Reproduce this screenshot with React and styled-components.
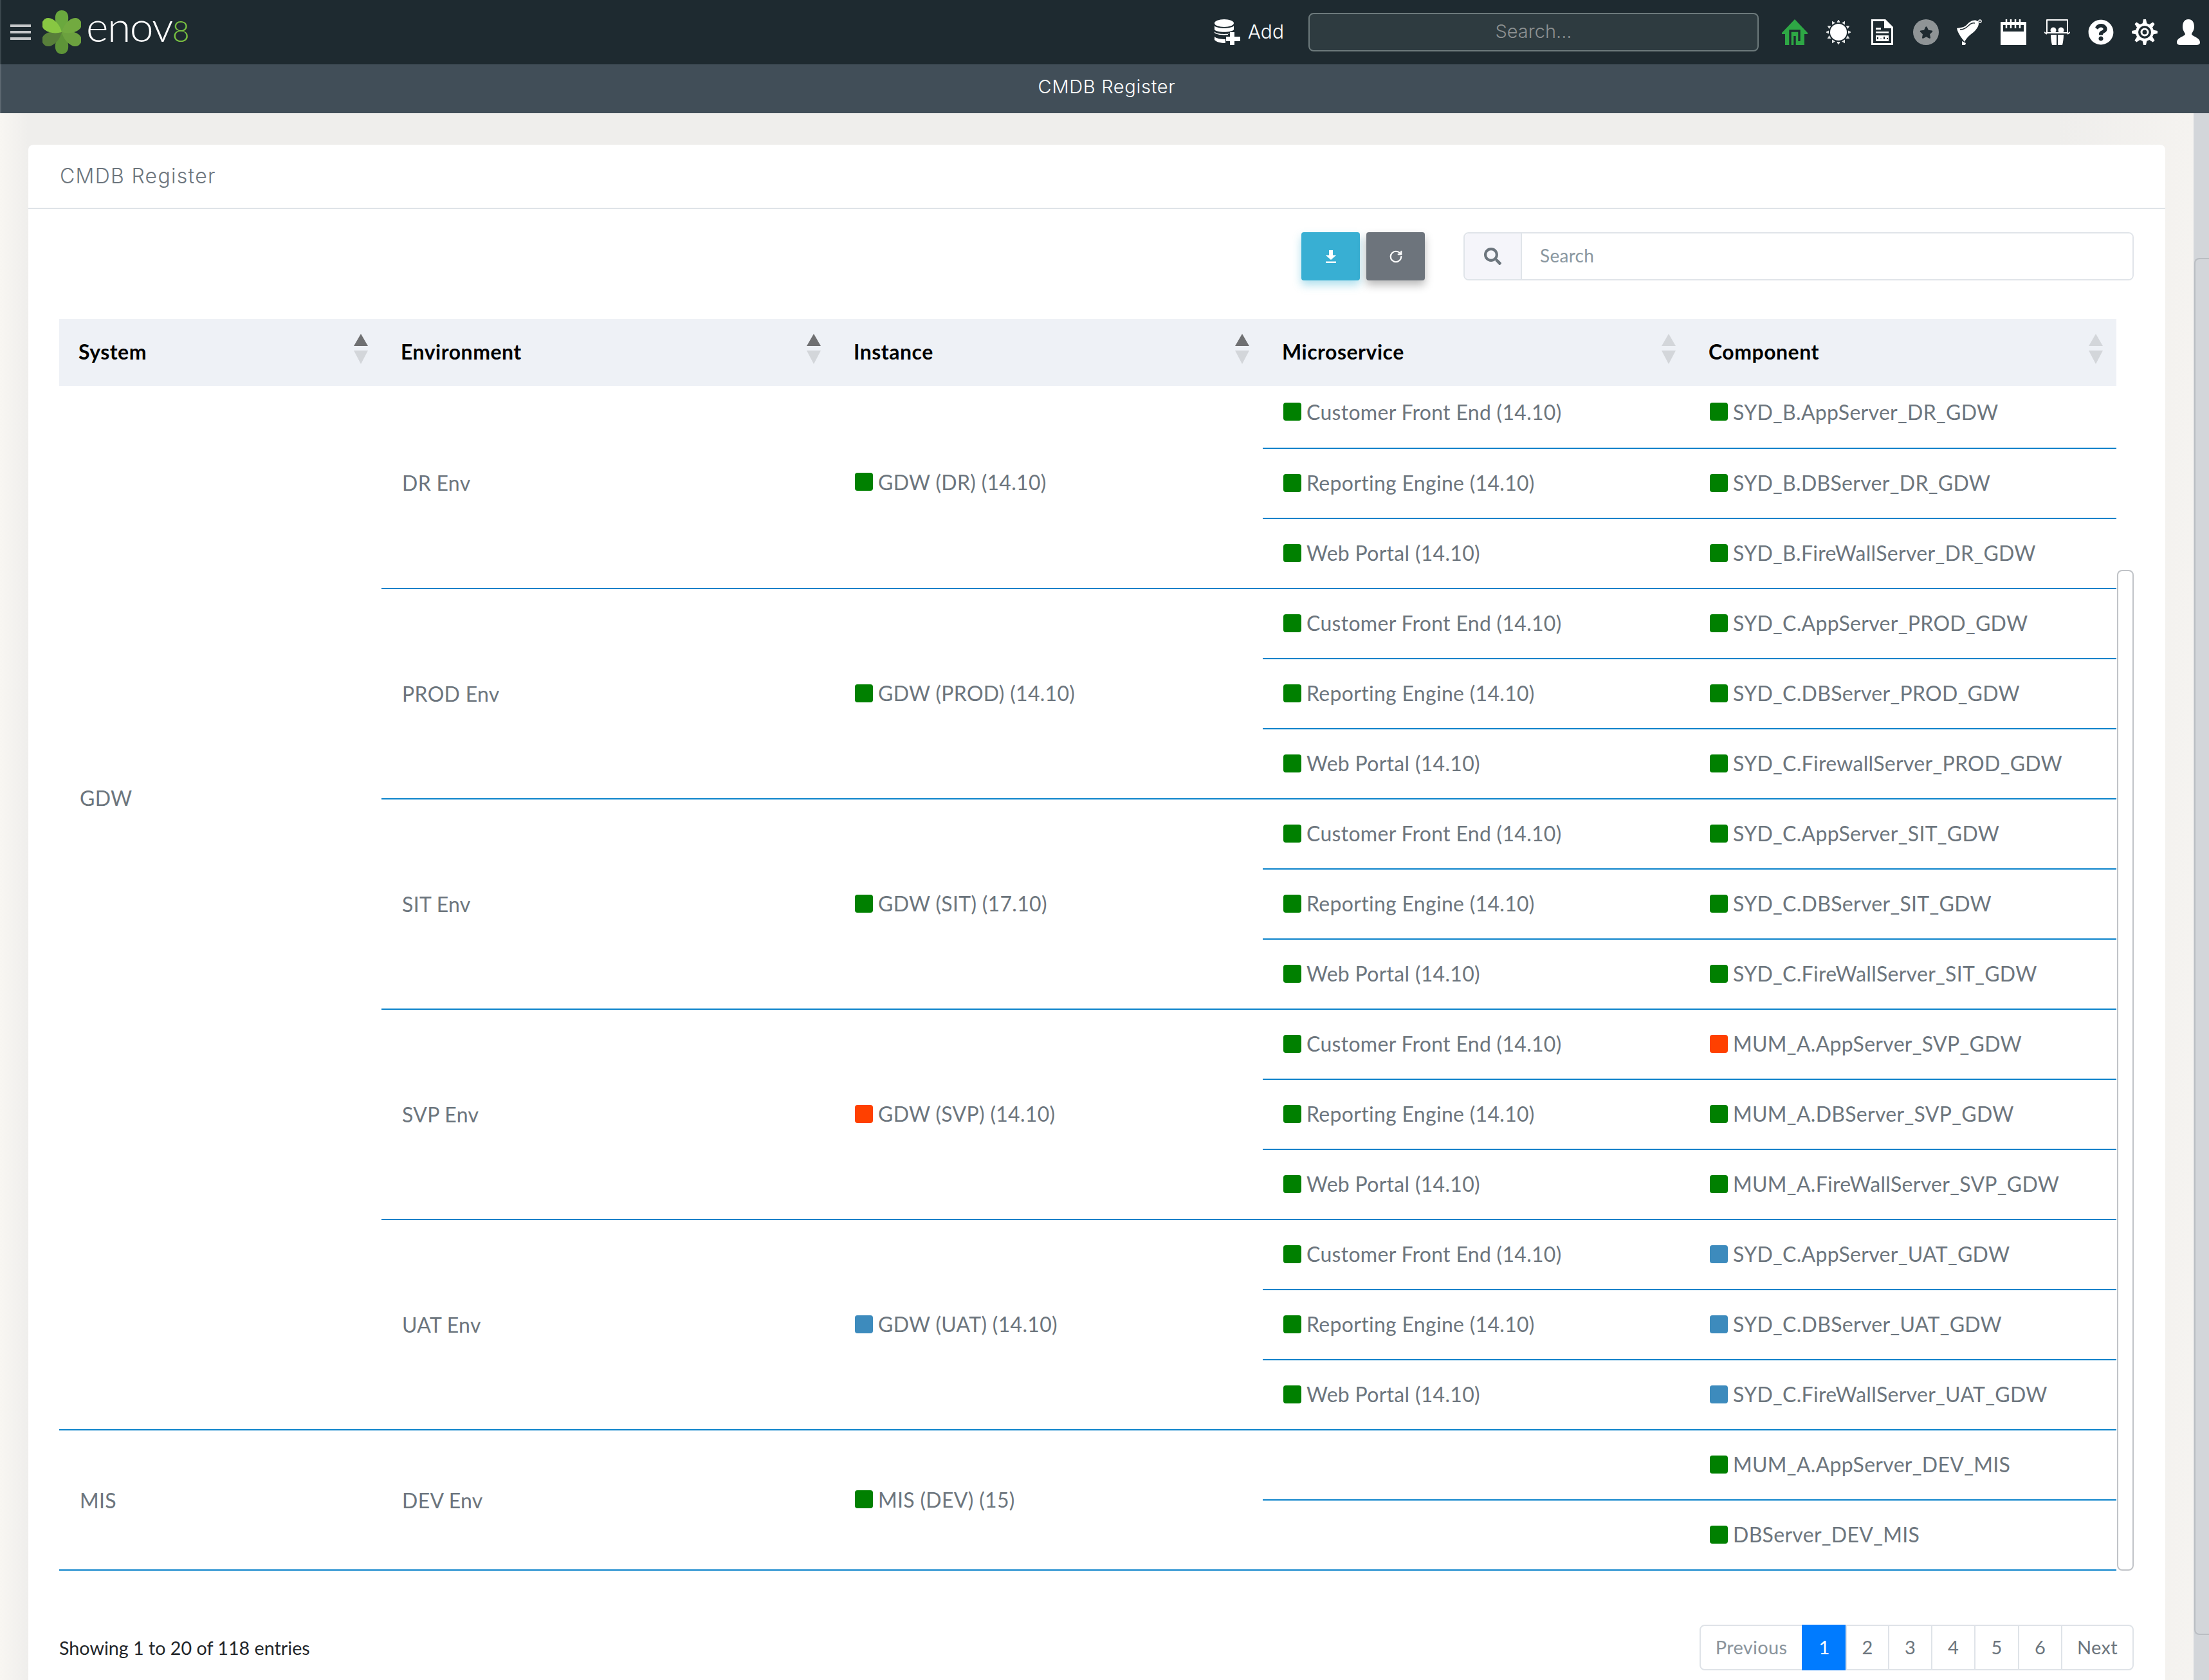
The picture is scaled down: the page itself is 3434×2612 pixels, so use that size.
import React from 'react';
import styled, { createGlobalStyle } from 'styled-components';
import { FaSearch, FaQuestionCircle, FaStar } from 'react-icons/fa';
import { RotateCw } from 'lucide-react';

const GREEN = '#008000';
const RED = '#ff4000';
const BLUE = '#3d8bbd';

const FRONT = 'Customer Front End (14.10)';
const ENGINE = 'Reporting Engine (14.10)';
const PORTAL = 'Web Portal (14.10)';
const MICRO = [FRONT, ENGINE, PORTAL];

const systems = [
  {
    name: 'GDW',
    envs: [
      { name: 'DR Env', instance: 'GDW (DR) (14.10)', color: GREEN, micro: MICRO, comps: [['SYD_B.AppServer_DR_GDW', GREEN], ['SYD_B.DBServer_DR_GDW', GREEN], ['SYD_B.FireWallServer_DR_GDW', GREEN]] },
      { name: 'PROD Env', instance: 'GDW (PROD) (14.10)', color: GREEN, micro: MICRO, comps: [['SYD_C.AppServer_PROD_GDW', GREEN], ['SYD_C.DBServer_PROD_GDW', GREEN], ['SYD_C.FirewallServer_PROD_GDW', GREEN]] },
      { name: 'SIT Env', instance: 'GDW (SIT) (17.10)', color: GREEN, micro: MICRO, comps: [['SYD_C.AppServer_SIT_GDW', GREEN], ['SYD_C.DBServer_SIT_GDW', GREEN], ['SYD_C.FireWallServer_SIT_GDW', GREEN]] },
      { name: 'SVP Env', instance: 'GDW (SVP) (14.10)', color: RED, micro: MICRO, comps: [['MUM_A.AppServer_SVP_GDW', RED], ['MUM_A.DBServer_SVP_GDW', GREEN], ['MUM_A.FireWallServer_SVP_GDW', GREEN]] },
      { name: 'UAT Env', instance: 'GDW (UAT) (14.10)', color: BLUE, micro: MICRO, comps: [['SYD_C.AppServer_UAT_GDW', BLUE], ['SYD_C.DBServer_UAT_GDW', BLUE], ['SYD_C.FireWallServer_UAT_GDW', BLUE]] },
    ],
  },
  {
    name: 'MIS',
    envs: [
      { name: 'DEV Env', instance: 'MIS (DEV) (15)', color: GREEN, micro: [null, null], comps: [['MUM_A.AppServer_DEV_MIS', GREEN], ['DBServer_DEV_MIS', GREEN]] },
    ],
  },
];

const columns = [
  { title: 'System', width: 501, active: true },
  { title: 'Environment', width: 704, active: true },
  { title: 'Instance', width: 666, active: true },
  { title: 'Microservice', width: 663 },
  { title: 'Component', width: 664 },
];

const pages = [
  { label: 'Previous', width: 161, muted: true },
  { label: '1', width: 70, active: true },
  { label: '2', width: 68 },
  { label: '3', width: 69 },
  { label: '4', width: 69 },
  { label: '5', width: 70 },
  { label: '6', width: 69 },
  { label: 'Next', width: 113 },
];

function Flower () {
  const petals = [
    [180, '#5e9438'], [120, '#6ca13f'], [240, '#587f3a'],
    [0, '#6aa83e'], [60, '#72aa40'], [300, '#88c742'],
  ];
  return (
    <svg width="60" height="68" viewBox="0 0 60 68">
      {petals.map(([angle, fill]) => (
        <path key={angle} d="M30 34C22 26 19 17 20 9 21 3 25 0 30 0 35 0 39 3 40 9 41 17 38 26 30 34Z" fill={fill} transform={`rotate(${angle} 30 34)`} />
      ))}
    </svg>
  );
}

function DbPlus () {
  return (
    <svg width="40" height="40" viewBox="0 0 40 40" fill="#fff">
      <ellipse cx="15" cy="6" rx="15" ry="6" />
      <path d="M0 10c3 5 27 5 30 0v6c-3 5-27 5-30 0z" />
      <path d="M0 19c3 5 24 5 30 1v2H21v2c-8 1-18 0-21-3z" />
      <path d="M0 27c3 3 10 4 17 4v6c-7 0-15-2-17-5z" />
      <path d="M24 20h7v7h9v7h-9v6h-7v-6h-6v-7h6z" />
    </svg>
  );
}

function HomeIcon () {
  return (
    <svg width="40" height="40" viewBox="0 0 40 40">
      <path d="M20 0 40 21 40 23H35V40H5V23H0V21Z" fill="#2ea745" />
      <path d="M13 40V18H27V34M20 40V26" fill="none" stroke="#1e2a30" strokeWidth="3.4" />
    </svg>
  );
}

function SunIcon () {
  const rays = Array.from({ length: 12 }, (_, i) => i * 30);
  return (
    <svg width="40" height="40" viewBox="0 0 40 40" fill="#fff">
      <circle cx="20" cy="20" r="13" />
      {rays.map(angle => (
        <path key={angle} d="M18 4.500 20 1 22 4.500Z" fill="#e3e5e5" stroke="#e3e5e5" strokeWidth="1" transform={`rotate(${angle} 20 20)`} />
      ))}
    </svg>
  );
}

function ReportIcon () {
  return (
    <svg width="34" height="40" viewBox="0 0 34 40" fill="#fff">
      <path fillRule="evenodd" d="M0 0H22L34 12V40H0ZM3 3V37H31V14H20V3Z" />
      <path d="M7 13h8v3H7zM7 19h20v2.500H7zM7 25h20v9H7z" />
      <path d="M10 31v-3M15 31v-1M20 31v-4M25 31v-2" stroke="#1e2a30" strokeWidth="2" />
    </svg>
  );
}

function StarIcon () {
  return (
    <StarDisc>
      <FaStar size={21} color="#1e2a30" />
    </StarDisc>
  );
}

function BellIcon () {
  return (
    <svg width="40" height="40" viewBox="0 0 40 40" fill="#fff">
      <path d="M33 3C27-1 20 3 15 9 11 13 5 13 0 14 1 20 6 28 12 35 14 31 17 27 21 24 28 19 37 10 33 3Z" />
      <path d="M5 16C10 16 14 14 18 10 21 7 24 5 28 6" fill="none" stroke="#1e2a30" strokeWidth="1.500" />
      <circle cx="36" cy="3" r="2" fill="none" stroke="#fff" strokeWidth="1.500" />
      <path d="M8 34l6 3-1 3H8z" />
    </svg>
  );
}

function NotepadIcon () {
  return (
    <svg width="40" height="40" viewBox="0 0 40 40" fill="#fff">
      <path fillRule="evenodd" d="M0 4H40V40H0ZM4 9V19H36V9Z" />
      <path d="M9 0v14M16 0v14M23 0v14M30 0v14" stroke="#fff" strokeWidth="2.500" />
    </svg>
  );
}

function SlidesIcon () {
  return (
    <svg width="40" height="40" viewBox="0 0 40 40" fill="#fff">
      <path d="M4 1H36V21H4Z" fill="none" stroke="#fff" strokeWidth="2" strokeLinejoin="round" />
      <path d="M0 20l4 3M40 20l-4 3" stroke="#fff" strokeWidth="2" />
      <circle cx="14" cy="17" r="4.500" />
      <circle cx="26" cy="17" r="4.500" />
      <path d="M10 24H19V40H12C11 36 10 30 10 24ZM21 24H30C30 30 29 36 28 40H21Z" />
    </svg>
  );
}

function GearIcon () {
  const teeth = Array.from({ length: 8 }, (_, i) => i * 45);
  return (
    <svg width="40" height="40" viewBox="0 0 40 40">
      {teeth.map(angle => (
        <path key={angle} d="M16.500 7 18 0H22L23.500 7Z" fill="#fff" transform={`rotate(${angle} 20 20)`} />
      ))}
      <circle cx="20" cy="20" r="12" fill="none" stroke="#fff" strokeWidth="4" />
      <circle cx="20" cy="20" r="5" fill="none" stroke="#fff" strokeWidth="3" />
    </svg>
  );
}

function UserIcon () {
  return (
    <svg width="36" height="40" viewBox="0 0 36 40" fill="#fff">
      <path d="M18 0C25 0 27 6 27 12 27 17 24 20 23 23 24 27 36 28 36 36 36 39 33 40 30 40H6C3 40 0 39 0 36 0 28 12 27 13 23 12 20 9 17 9 12 9 6 11 0 18 0Z" />
    </svg>
  );
}

function Status ({ color, children }) {
  return (
    <StatusText>
      <Square $color={color} />
      {children}
    </StatusText>
  );
}

function Rows () {
  return systems.map(system => {
    const total = system.envs.reduce((sum, env) => sum + env.comps.length, 0);
    return system.envs.map((env, e) => env.comps.map(([comp, color], c) => {
      const first = system.name === 'GDW' && e === 0;
      const short = first && c === 0;
      return (
        <tr key={comp}>
          {e === 0 && c === 0 && (
            <Cell rowSpan={total} $system={system.name === 'GDW'} $height={109}>{system.name}</Cell>
          )}
          {c === 0 && <Cell rowSpan={env.comps.length} $pad={first}>{env.name}</Cell>}
          {c === 0 && (
            <Cell rowSpan={env.comps.length} $pad={first}>
              <Status color={env.color}>{env.instance}</Status>
            </Cell>
          )}
          <Cell $pad={short} $height={short ? 98 : 109}>
            {env.micro[c] && <Status color={GREEN}>{env.micro[c]}</Status>}
          </Cell>
          <Cell $pad={short} $height={short ? 98 : 109}>
            <Status color={color}>{comp}</Status>
          </Cell>
        </tr>
      );
    }));
  });
}

export default function App () {
  return (
    <>
      <GlobalStyle />
      <TopBar>
        <Burger><i /><i /><i /></Burger>
        <Flower />
        <Logo>enov<LogoDigit>8</LogoDigit></Logo>
        <AddLink>
          <DbPlus />
          <AddText>Add</AddText>
        </AddLink>
        <TopSearch placeholder="Search..." />
        <Icons>
          <IconSlot><HomeIcon /></IconSlot>
          <IconSlot><SunIcon /></IconSlot>
          <IconSlot><ReportIcon /></IconSlot>
          <IconSlot><StarIcon /></IconSlot>
          <IconSlot><BellIcon /></IconSlot>
          <IconSlot><NotepadIcon /></IconSlot>
          <IconSlot><SlidesIcon /></IconSlot>
          <IconSlot><FaQuestionCircle size={40} color="#fff" /></IconSlot>
          <IconSlot><GearIcon /></IconSlot>
          <IconSlot><UserIcon /></IconSlot>
        </Icons>
      </TopBar>
      <SubBar>CMDB Register</SubBar>
      <Main>
        <Content>
          <Card>
            <CardHead>CMDB Register</CardHead>
            <CardBody>
              <Toolbar>
                <ActionButton $color="#38afd3" $shadow="rgba(56, 175, 211, .4)">
                  <svg width="16" height="20" viewBox="0 0 16 20" fill="#fff">
                    <path d="M5 0H11V8H16L8 15 0 8H5ZM0 17.500H16V20H0Z" />
                  </svg>
                </ActionButton>
                <ActionButton $color="#6d747c" $shadow="rgba(0, 0, 0, .28)">
                  <RotateCw size={22} color="#fff" strokeWidth={2.4} />
                </ActionButton>
                <SearchGroup>
                  <SearchAddon><FaSearch size={27} color="#6c757d" /></SearchAddon>
                  <SearchInput placeholder="Search" />
                </SearchGroup>
              </Toolbar>
              <TableWrap>
                <Table>
                  <colgroup>
                    {columns.map(col => <col key={col.title} width={col.width} />)}
                  </colgroup>
                  <thead>
                    <tr>
                      {columns.map(col => (
                        <HeadCell key={col.title}>
                          <HeadInner>
                            <HeadLabel>{col.title}</HeadLabel>
                            <Sort>
                              <SortUp $active={col.active} />
                              <SortDown />
                            </Sort>
                          </HeadInner>
                        </HeadCell>
                      ))}
                    </tr>
                  </thead>
                  <tbody>
                    <Rows />
                  </tbody>
                </Table>
                <TableScroll />
              </TableWrap>
              <Footer>
                <Showing>Showing 1 to 20 of 118 entries</Showing>
                <Pagination>
                  {pages.map(page => (
                    <PageItem key={page.label} $width={page.width} $active={page.active} $muted={page.muted}>
                      {page.label}
                    </PageItem>
                  ))}
                </Pagination>
              </Footer>
            </CardBody>
          </Card>
        </Content>
        <PageScroll>
          <PageThumb />
        </PageScroll>
      </Main>
    </>
  );
}

const GlobalStyle = createGlobalStyle`
  html, body {
    margin: 0;
    height: 100%;
    overflow: hidden;
  }

  body {
    font-family: Lato, "Liberation Sans", sans-serif;
    font-size: 31px;
    color: #6c757d;
  }
`;

const TopBar = styled.header`
  height: 100px;
  padding: 0 12px 0 16px;
  background-color: #1e2a30;
  border-left: 2px solid #3a464c;
  box-sizing: border-box;

  display: flex;
  align-items: center;
`;

const Burger = styled.div`
  width: 32px;
  margin: 0 18px 0 -2px;

  display: flex;
  flex-direction: column;
  gap: 6px;

  i {
    height: 4px;
    background-color: #c4c6c8;
  }
`;

const Logo = styled.div`
  margin-left: 8px;
  font-family: Lato, sans-serif;
  font-weight: 300;
  font-size: 66px;
  line-height: 68px;
  letter-spacing: -1.5px;
  color: #fff;
  position: relative;
  top: -6px;
`;

const LogoDigit = styled.span`
  font-size: 46px;
  color: #7cc242;
  letter-spacing: 0;
`;

const AddLink = styled.div`
  margin-left: auto;
  color: #fff;

  display: flex;
  align-items: center;
  gap: 12px;
`;

const AddText = styled.span`
  font-family: Inter, sans-serif;
  font-weight: 300;
  font-size: 30px;
  margin-top: -3px;
`;

const TopSearch = styled.input`
  width: 700px;
  height: 60px;
  margin: 0 36px 0 38px;
  padding: 0 0 4px;
  background-color: #2e3b40;
  border: 2px solid #6d7a7c;
  border-radius: 8px;
  box-sizing: border-box;
  text-align: center;
  font-family: Inter, sans-serif;
  font-weight: 300;
  font-size: 29px;

  &::placeholder {
    color: #8d9192;
    opacity: 1;
  }
`;

const Icons = styled.div`
  display: flex;
  gap: 28px;
`;

const IconSlot = styled.div`
  width: 40px;
  height: 40px;

  display: flex;
  align-items: center;
  justify-content: center;
`;

const StarDisc = styled.div`
  width: 40px;
  height: 40px;
  border-radius: 50%;
  background-color: #8f9496;

  display: flex;
  align-items: center;
  justify-content: center;
`;

const SubBar = styled.div`
  height: 76px;
  padding: 0 0 7px 5px;
  background-color: #414e58;
  border-left: 2px solid #5b666f;
  box-sizing: border-box;
  color: #fff;
  font-family: Inter, sans-serif;
  font-weight: 300;
  font-size: 29px;
  letter-spacing: .7px;

  display: flex;
  align-items: center;
  justify-content: center;
`;

const Main = styled.main`
  height: 2436px;
  overflow: hidden;

  display: flex;
`;

const Content = styled.div`
  flex: 1;
  padding: 49px 44px 0;
  background: linear-gradient(90deg, #f8f6f2 0, #efeeec 44px, #efeeec 3200px, #f5f3f0 100%);

  display: flex;
`;

const Card = styled.section`
  flex: 1;
  background-color: #fff;
  border-radius: 8px 8px 0 0;

  display: flex;
  flex-direction: column;
`;

const CardHead = styled.h2`
  height: 100px;
  margin: 0;
  padding: 0 49px 2px;
  border-bottom: 2px solid #dfe3e8;
  box-sizing: border-box;
  color: #6c757d;
  font-family: Inter, sans-serif;
  font-weight: 300;
  font-size: 32px;
  letter-spacing: 1.3px;

  display: flex;
  align-items: center;
`;

const CardBody = styled.div`
  padding: 36px 49px 0 48px;
`;

const Toolbar = styled.div`
  display: flex;
  justify-content: flex-end;
  gap: 10px;
`;

const ActionButton = styled.button`
  width: 91px;
  height: 75px;
  padding: 0;
  border: 0;
  border-radius: 4px;
  background-color: ${props => props.$color};
  box-shadow: 0 7px 14px ${props => props.$shadow};

  display: flex;
  align-items: center;
  justify-content: center;
`;

const SearchGroup = styled.div`
  width: 1042px;
  height: 75px;
  margin-left: 50px;
  border: 2px solid #e0e4e9;
  border-radius: 8px;
  box-sizing: border-box;
  overflow: hidden;

  display: flex;
`;

const SearchAddon = styled.div`
  width: 87px;
  background-color: #f5f5fa;
  border-right: 2px solid #e0e4e9;

  display: flex;
  align-items: center;
  justify-content: center;
`;

const SearchInput = styled.input`
  flex: 1;
  padding: 0 28px 3px;
  border: 0;
  font-family: Lato, sans-serif;
  font-size: 28px;
  letter-spacing: .3px;

  &::placeholder {
    color: #8a97a0;
    opacity: 1;
  }
`;

const TableWrap = styled.div`
  margin-top: 60px;
  position: relative;
`;

const Table = styled.table`
  width: 3198px;
  table-layout: fixed;
  border-collapse: separate;
  border-spacing: 0;
`;

const HeadCell = styled.th`
  height: 104px;
  padding: 0 21px 0 30px;
  background-color: #eef1f6;
  color: #000;
  font-weight: 700;
  font-size: 32px;
  letter-spacing: .5px;
  text-align: left;
`;

const HeadInner = styled.div`
  display: flex;
  align-items: center;
  justify-content: space-between;
`;

const HeadLabel = styled.span`
  margin-top: -3px;
`;

const Sort = styled.span`
  margin-top: -12px;

  display: flex;
  flex-direction: column;
  gap: 7px;
`;

const SortUp = styled.i`
  border-style: solid;
  border-width: 0 11px 19px;
  border-color: transparent transparent ${props => (props.$active ? '#6f7072' : '#d3d6da')};
`;

const SortDown = styled.i`
  border-style: solid;
  border-width: 21px 11px 0;
  border-color: #d3d6da transparent transparent;
`;

const Cell = styled.td`
  height: ${props => props.$height || 0}px;
  padding: 0 20px ${props => (props.$system ? '341px' : props.$pad ? '14px' : '0')} 32px;
  border-bottom: 2px solid #0a82ca;
  box-sizing: border-box;
  color: #6c757d;
  font-size: 32px;
  letter-spacing: .3px;
  vertical-align: middle;
`;

const StatusText = styled.span`
  display: inline-flex;
  align-items: center;
`;

const Square = styled.i`
  width: 28px;
  height: 28px;
  margin: 0 8px 0 0;
  border-radius: 4px;
  background-color: ${props => props.$color};
`;

const TableScroll = styled.div`
  width: 26px;
  border: 2px solid #c0c3c7;
  border-radius: 8px;
  box-sizing: border-box;
  background-color: #fff;

  position: absolute;
  top: 390px;
  bottom: 0;
  right: 0;
`;

const Footer = styled.div`
  margin-top: 84px;

  display: flex;
  align-items: center;
  justify-content: space-between;
`;

const Showing = styled.div`
  color: #212529;
  font-size: 28.7px;
`;

const Pagination = styled.nav`
  display: flex;
  padding-left: 2px;
`;

const PageItem = styled.span`
  width: ${props => props.$width}px;
  height: 71px;
  padding-bottom: 3px;
  margin-left: -2px;
  border: 2px solid ${props => (props.$active ? '#007bff' : '#dfe3e8')};
  box-sizing: border-box;
  background-color: ${props => (props.$active ? '#007bff' : '#fff')};
  color: ${props => (props.$active ? '#fff' : props.$muted ? '#8a949c' : '#6c757d')};
  font-size: 29px;
  letter-spacing: .3px;

  display: flex;
  align-items: center;
  justify-content: center;

  &:first-child {
    border-radius: 8px 0 0 8px;
  }

  &:last-child {
    border-radius: 0 8px 8px 0;
  }
`;

const PageScroll = styled.aside`
  width: 24px;
  padding-top: 225px;
  background-color: #d3d6da;
`;

const PageThumb = styled.div`
  height: 2141px;
  margin-left: 1px;
  border: 2px solid #b9bdc2;
  border-right: 0;
  border-radius: 8px 0 0 8px;
  box-sizing: border-box;
`;
